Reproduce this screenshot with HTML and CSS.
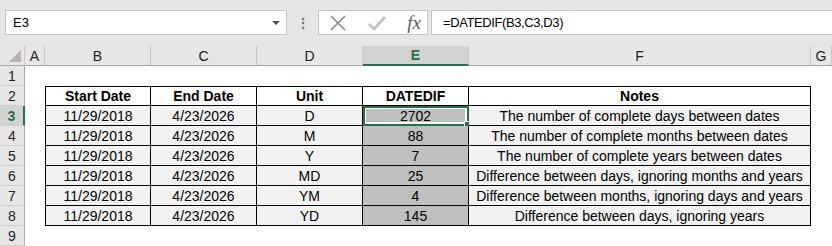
FILE: index.html
```html
<!DOCTYPE html>
<html>
<head>
<meta charset="UTF-8">
<title>DATEDIF</title>
<link rel="stylesheet" href="styles.css">
</head>
<body>
	<div id="main">
		<div class="formulaBar">
			<div class="nameBox">
				<span>E3</span>
				<span class="dropArrow"></span>
			</div>
			<div class="dots">&#8942;</div>
			<div class="fxButtons">
				<svg class="btnIcon" width="18" height="18" viewBox="0 0 18 18">
					<path d="M2 2 L16 16 M16 2 L2 16" stroke="#8a8a8a" stroke-width="1.6" fill="none"/>
				</svg>
				<svg class="btnIcon" width="20" height="18" viewBox="0 0 20 18">
					<path d="M2 10 L7 15 L18 3" stroke="#c4c4c4" stroke-width="3" fill="none"/>
				</svg>
				<span class="fx">fx</span>
			</div>
			<div class="formulaInput">=DATEDIF(B3,C3,D3)</div>
		</div>

		<div class="sheet">
			<div class="colHead corner"><span class="tri"></span></div>
			<div class="colHead">A</div>
			<div class="colHead">B</div>
			<div class="colHead">C</div>
			<div class="colHead">D</div>
			<div class="colHead active">E</div>
			<div class="colHead">F</div>
			<div class="colHead">G</div>

			<div class="rowHead">1</div>
			<div class="blank wide"></div>

			<div class="rowHead">2</div>
			<div class="blank"></div>
			<div class="cell head first top">Start Date</div>
			<div class="cell head top">End Date</div>
			<div class="cell head top">Unit</div>
			<div class="cell head top">DATEDIF</div>
			<div class="cell head top">Notes</div>
			<div class="blank"></div>

			<div class="rowHead active">3</div>
			<div class="blank"></div>
			<div class="cell first">11/29/2018</div>
			<div class="cell">4/23/2026</div>
			<div class="cell">D</div>
			<div class="cell result selected">2702<span class="handle"></span></div>
			<div class="cell">The number of complete days between dates</div>
			<div class="blank"></div>

			<div class="rowHead">4</div>
			<div class="blank"></div>
			<div class="cell first">11/29/2018</div>
			<div class="cell">4/23/2026</div>
			<div class="cell">M</div>
			<div class="cell result">88</div>
			<div class="cell">The number of complete months between dates</div>
			<div class="blank"></div>

			<div class="rowHead">5</div>
			<div class="blank"></div>
			<div class="cell first">11/29/2018</div>
			<div class="cell">4/23/2026</div>
			<div class="cell">Y</div>
			<div class="cell result">7</div>
			<div class="cell">The number of complete years between dates</div>
			<div class="blank"></div>

			<div class="rowHead">6</div>
			<div class="blank"></div>
			<div class="cell first">11/29/2018</div>
			<div class="cell">4/23/2026</div>
			<div class="cell">MD</div>
			<div class="cell result">25</div>
			<div class="cell">Difference between days, ignoring months and years</div>
			<div class="blank"></div>

			<div class="rowHead">7</div>
			<div class="blank"></div>
			<div class="cell first">11/29/2018</div>
			<div class="cell">4/23/2026</div>
			<div class="cell">YM</div>
			<div class="cell result">4</div>
			<div class="cell">Difference between months, ignoring days and years</div>
			<div class="blank"></div>

			<div class="rowHead">8</div>
			<div class="blank"></div>
			<div class="cell first">11/29/2018</div>
			<div class="cell">4/23/2026</div>
			<div class="cell">YD</div>
			<div class="cell result">145</div>
			<div class="cell">Difference between days, ignoring years</div>
			<div class="blank"></div>

			<div class="rowHead">9</div>
			<div class="blank wide"></div>
		</div>
	</div>
</body>
</html>
```

FILE: styles.css
```css
body {
	margin: 0;
	background-color: #FFFFFF;
	font-family: "Liberation Sans", Arial, sans-serif;
	font-size: 14px;
	color: #000000;
}

#main {
	width: 832px;
	height: 246px;
	overflow: hidden;
}

.formulaBar {
	display: flex;
	align-items: center;
	height: 46px;
	padding: 0 0 1px 5px;
	box-sizing: border-box;
	background-color: #E6E6E6;
}

.nameBox {
	display: flex;
	align-items: center;
	justify-content: space-between;
	width: 282px;
	height: 25px;
	padding: 0 6px 0 7px;
	box-sizing: border-box;
	background-color: #FFFFFF;
	border: 1px solid #C6C6C6;
	font-size: 13px;
}

.dropArrow {
	width: 0;
	height: 0;
	border-left: 4px solid transparent;
	border-right: 4px solid transparent;
	border-top: 4px solid #555555;
}

.dots {
	width: 31px;
	text-align: center;
	color: #707070;
	font-size: 14px;
	font-weight: bold;
}

.fxButtons {
	display: flex;
	align-items: center;
	justify-content: space-between;
	width: 110px;
	height: 25px;
	padding: 0 6px 0 10px;
	box-sizing: border-box;
	background-color: #FFFFFF;
	border: 1px solid #C6C6C6;
}

.fx {
	font-family: "Liberation Serif", "Times New Roman", serif;
	font-style: italic;
	font-size: 19px;
	color: #5A5A5A;
}

.formulaInput {
	flex: 1;
	height: 25px;
	margin-left: 3px;
	padding-left: 11px;
	box-sizing: border-box;
	line-height: 23px;
	background-color: #FFFFFF;
	border: 1px solid #C6C6C6;
	border-right: none;
	font-size: 13px;
	letter-spacing: -0.4px;
}

.sheet {
	display: grid;
	grid-template-columns: 25px 20px 106px 106px 106px 106px 342px 21px;
	grid-auto-rows: 20px;
}

.colHead {
	position: relative;
	display: flex;
	align-items: center;
	justify-content: center;
	box-sizing: border-box;
	background-color: #E6E6E6;
	border-right: 1px solid #C9C9C9;
	border-bottom: 1px solid #ABABAB;
	color: #222222;
}

.colHead.active {
	background-color: #D2D2D2;
	border-bottom: 2px solid #217346;
	color: #217346;
	font-weight: bold;
}

.corner .tri {
	position: absolute;
	right: 3px;
	bottom: 3px;
	width: 0;
	height: 0;
	border-left: 12px solid transparent;
	border-bottom: 12px solid #B4B4B4;
}

.rowHead {
	display: flex;
	align-items: center;
	justify-content: center;
	box-sizing: border-box;
	background-color: #E6E6E6;
	border-right: 1px solid #ABABAB;
	border-bottom: 1px solid #D0D0D0;
	color: #222222;
}

.rowHead.active {
	background-color: #D2D2D2;
	border-right: 2px solid #217346;
	color: #217346;
	font-weight: bold;
}

.blank.wide {
	grid-column: span 7;
}

.cell {
	position: relative;
	display: flex;
	align-items: center;
	justify-content: center;
	box-sizing: border-box;
	background-color: #F2F2F2;
	border-right: 1px solid #000000;
	border-bottom: 1px solid #000000;
	white-space: nowrap;
}

.cell.first {
	border-left: 1px solid #000000;
}

.cell.top {
	border-top: 1px solid #000000;
}

.cell.head {
	background-color: #FFFFFF;
	font-weight: bold;
}

.cell.result {
	background-color: #BFBFBF;
}

.cell.selected {
	outline: 2px solid #217346;
	outline-offset: -2px;
	box-shadow: inset 0 0 0 3px #FFFFFF;
}

.handle {
	position: absolute;
	right: -4px;
	bottom: -4px;
	width: 6px;
	height: 6px;
	background-color: #217346;
	border: 1px solid #FFFFFF;
}
```
